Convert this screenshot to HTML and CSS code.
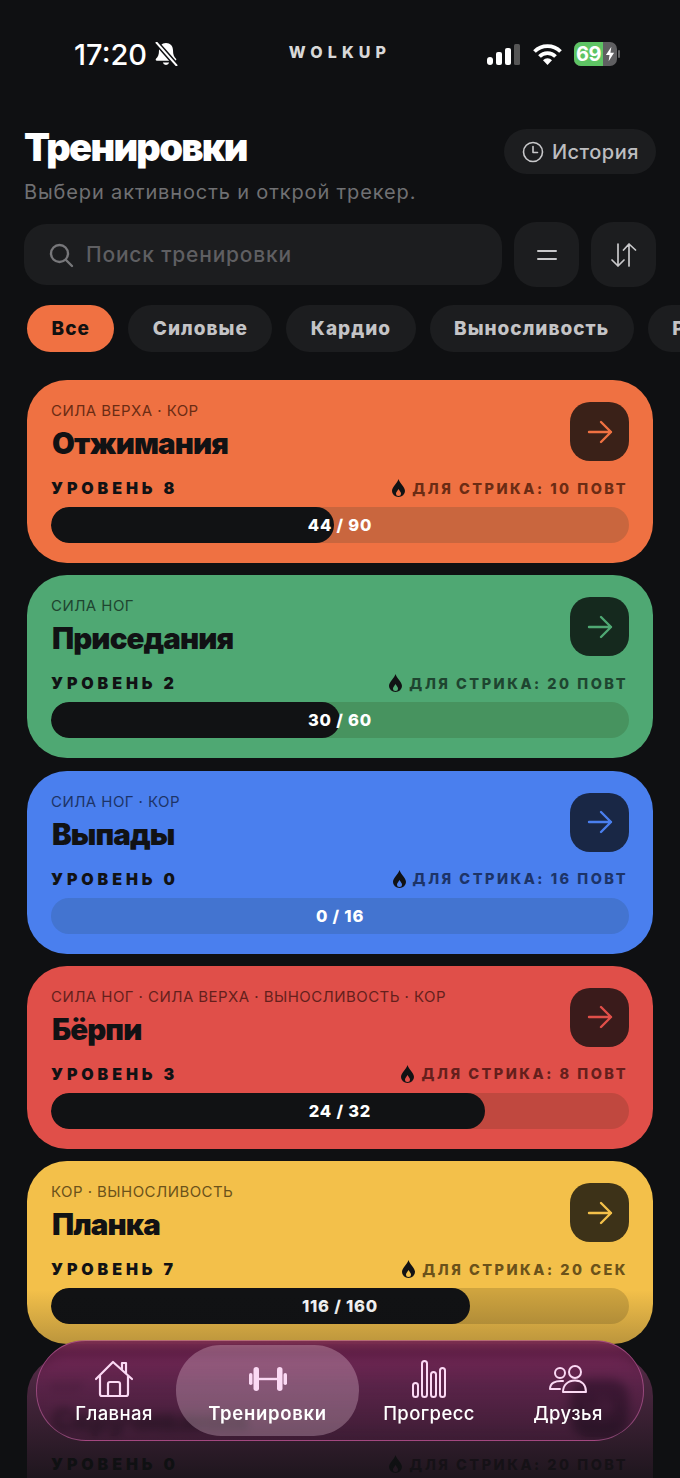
FILE: index.html
```html
<!DOCTYPE html>
<html lang="ru">
<head>
    <meta charset="UTF-8">
    <meta name="viewport" content="width=device-width, initial-scale=1.0">
    <title>Тренировки</title>
    <link rel="stylesheet" href="styles.css">
</head>
<body>
    <div class="screen">
        <div class="status">
            <div class="status-left">
                <span class="clock">17:20</span>
                <svg class="bell" width="24" height="24" viewBox="0 0 24 24">
                    <path d="M12 1c-4.200 0-7 3-7 7.300 0 4.500-1 6.500-3 8.500-.7.800-.3 2 .9 2h18.200c1.200 0 1.600-1.200.9-2C20 14.800 19 12.800 19 8.300 19 4 16.200 1 12 1zM8.800 20.500a3.300 3.300 0 0 0 6.400 0z" fill="#fff"/>
                    <path d="M2 0 L23 24" stroke="#0f1012" stroke-width="5"/>
                    <path d="M2 0 L23 24" stroke="#fff" stroke-width="2"/>
                </svg>
            </div>
            <div class="brand">WOLKUP</div>
            <div class="status-right">
                <svg width="33" height="21" viewBox="0 0 33 21">
                    <rect x="0" y="13" width="6" height="8" rx="3" fill="#fff"/>
                    <rect x="9" y="8" width="6" height="13" rx="2" fill="#fff"/>
                    <rect x="18" y="4" width="6" height="17" rx="2" fill="#fff"/>
                    <rect x="27" y="0" width="6" height="21" rx="1.500" fill="#555"/>
                </svg>
                <svg width="29" height="21" viewBox="0 0 29 21">
                    <path d="M1.500 7.500 A18.500 18.500 0 0 1 27.500 7.500" fill="none" stroke="#fff" stroke-width="3.800"/>
                    <path d="M6.500 12.500 A11.300 11.300 0 0 1 22.500 12.500" fill="none" stroke="#fff" stroke-width="3.800"/>
                    <path d="M14.500 21 L10 16.200 A6.400 6.400 0 0 1 19 16.200 Z" fill="#fff"/>
                </svg>
                <div class="battery">
                    <div class="battery-fill">69</div>
                    <svg class="bolt" width="10" height="16" viewBox="0 0 11 16"><path d="M7 0 L1 9 H5 L4 16 L10 6.500 H6 Z" fill="#fff"/></svg>
                </div>
            </div>
        </div>

        <div class="head">
            <div>
                <h1>Тренировки</h1>
                <p class="sub">Выбери активность и открой трекер.</p>
            </div>
            <div class="history">
                <svg width="22" height="22" viewBox="0 0 22 22" fill="none" stroke="#c8c8ca" stroke-width="1.600" stroke-linecap="round" stroke-linejoin="round">
                    <circle cx="11" cy="11" r="9.500"/><path d="M11 5.500 V11.500 H15.500"/>
                </svg>
                История
            </div>
        </div>

        <div class="search-row">
            <div class="search">
                <svg width="26" height="26" viewBox="0 0 26 26" fill="none" stroke="#77777a" stroke-width="2.400" stroke-linecap="round">
                    <circle cx="11.500" cy="11.500" r="8.500"/><path d="M18 18 L24 24"/>
                </svg>
                <span>Поиск тренировки</span>
            </div>
            <div class="square-btn">
                <svg width="22" height="14" viewBox="0 0 22 14"><path d="M2 3 H20 M2 11 H20" stroke="#c8c8ca" stroke-width="2" stroke-linecap="round"/></svg>
            </div>
            <div class="square-btn">
                <svg width="28" height="26" viewBox="0 0 28 26" fill="none" stroke="#c8c8ca" stroke-width="1.700" stroke-linecap="round" stroke-linejoin="round">
                    <path d="M8 2 V24 M2 18 L8 24 L14 18"/><path d="M19 24 V2 M13.500 8 L19 2 L25.500 8"/>
                </svg>
            </div>
        </div>

        <div class="chips">
            <div class="chip active">Все</div>
            <div class="chip">Силовые</div>
            <div class="chip">Кардио</div>
            <div class="chip">Выносливость</div>
            <div class="chip">Растяжка</div>
        </div>

        <div class="cards">
            <div class="card orange">
                <div class="card-top">
                    <div>
                        <div class="tags">СИЛА ВЕРХА · КОР</div>
                        <div class="name">Отжимания</div>
                    </div>
                    <div class="go"><svg width="26" height="26" viewBox="0 0 26 26"><path d="M2 13 H24 M14 3 L24 13 L14 23"/></svg></div>
                </div>
                <div class="meta">
                    <span class="level">УРОВЕНЬ 8</span>
                    <span class="streak"><svg width="13" height="18" viewBox="0 0 13 18"><path d="M6.500 0 C7.500 4 13 8 13 12 A6.500 6 0 0 1 0 12 C0 8 5.500 4 6.500 0 Z M6.500 10 C5.500 12 4 13 4 14.500 A2.500 2.500 0 0 0 9 14.500 C9 13 7.500 12 6.500 10 Z" fill="#111214" fill-rule="evenodd"/></svg>ДЛЯ СТРИКА: 10 ПОВТ</span>
                </div>
                <div class="bar">
                    <div class="bar-fill" style="width: 48.900%"></div>
                    <div class="bar-text">44 / 90</div>
                </div>
            </div>

            <div class="card green">
                <div class="card-top">
                    <div>
                        <div class="tags">СИЛА НОГ</div>
                        <div class="name">Приседания</div>
                    </div>
                    <div class="go"><svg width="26" height="26" viewBox="0 0 26 26"><path d="M2 13 H24 M14 3 L24 13 L14 23"/></svg></div>
                </div>
                <div class="meta">
                    <span class="level">УРОВЕНЬ 2</span>
                    <span class="streak"><svg width="13" height="18" viewBox="0 0 13 18"><path d="M6.500 0 C7.500 4 13 8 13 12 A6.500 6 0 0 1 0 12 C0 8 5.500 4 6.500 0 Z M6.500 10 C5.500 12 4 13 4 14.500 A2.500 2.500 0 0 0 9 14.500 C9 13 7.500 12 6.500 10 Z" fill="#111214" fill-rule="evenodd"/></svg>ДЛЯ СТРИКА: 20 ПОВТ</span>
                </div>
                <div class="bar">
                    <div class="bar-fill" style="width: 50%"></div>
                    <div class="bar-text">30 / 60</div>
                </div>
            </div>

            <div class="card blue">
                <div class="card-top">
                    <div>
                        <div class="tags">СИЛА НОГ · КОР</div>
                        <div class="name">Выпады</div>
                    </div>
                    <div class="go"><svg width="26" height="26" viewBox="0 0 26 26"><path d="M2 13 H24 M14 3 L24 13 L14 23"/></svg></div>
                </div>
                <div class="meta">
                    <span class="level">УРОВЕНЬ 0</span>
                    <span class="streak"><svg width="13" height="18" viewBox="0 0 13 18"><path d="M6.500 0 C7.500 4 13 8 13 12 A6.500 6 0 0 1 0 12 C0 8 5.500 4 6.500 0 Z M6.500 10 C5.500 12 4 13 4 14.500 A2.500 2.500 0 0 0 9 14.500 C9 13 7.500 12 6.500 10 Z" fill="#111214" fill-rule="evenodd"/></svg>ДЛЯ СТРИКА: 16 ПОВТ</span>
                </div>
                <div class="bar">
                    <div class="bar-text">0 / 16</div>
                </div>
            </div>

            <div class="card red">
                <div class="card-top">
                    <div>
                        <div class="tags">СИЛА НОГ · СИЛА ВЕРХА · ВЫНОСЛИВОСТЬ · КОР</div>
                        <div class="name">Бёрпи</div>
                    </div>
                    <div class="go"><svg width="26" height="26" viewBox="0 0 26 26"><path d="M2 13 H24 M14 3 L24 13 L14 23"/></svg></div>
                </div>
                <div class="meta">
                    <span class="level">УРОВЕНЬ 3</span>
                    <span class="streak"><svg width="13" height="18" viewBox="0 0 13 18"><path d="M6.500 0 C7.500 4 13 8 13 12 A6.500 6 0 0 1 0 12 C0 8 5.500 4 6.500 0 Z M6.500 10 C5.500 12 4 13 4 14.500 A2.500 2.500 0 0 0 9 14.500 C9 13 7.500 12 6.500 10 Z" fill="#111214" fill-rule="evenodd"/></svg>ДЛЯ СТРИКА: 8 ПОВТ</span>
                </div>
                <div class="bar">
                    <div class="bar-fill" style="width: 75%"></div>
                    <div class="bar-text">24 / 32</div>
                </div>
            </div>

            <div class="card yellow">
                <div class="card-top">
                    <div>
                        <div class="tags">КОР · ВЫНОСЛИВОСТЬ</div>
                        <div class="name">Планка</div>
                    </div>
                    <div class="go"><svg width="26" height="26" viewBox="0 0 26 26"><path d="M2 13 H24 M14 3 L24 13 L14 23"/></svg></div>
                </div>
                <div class="meta">
                    <span class="level">УРОВЕНЬ 7</span>
                    <span class="streak"><svg width="13" height="18" viewBox="0 0 13 18"><path d="M6.500 0 C7.500 4 13 8 13 12 A6.500 6 0 0 1 0 12 C0 8 5.500 4 6.500 0 Z M6.500 10 C5.500 12 4 13 4 14.500 A2.500 2.500 0 0 0 9 14.500 C9 13 7.500 12 6.500 10 Z" fill="#111214" fill-rule="evenodd"/></svg>ДЛЯ СТРИКА: 20 СЕК</span>
                </div>
                <div class="bar">
                    <div class="bar-fill" style="width: 72.500%"></div>
                    <div class="bar-text">116 / 160</div>
                </div>
            </div>

            <div class="card purple">
                <div class="card-top">
                    <div>
                        <div class="tags">КОР</div>
                        <div class="name">Скручивания</div>
                    </div>
                    <div class="go"><svg width="26" height="26" viewBox="0 0 26 26"><path d="M2 13 H24 M14 3 L24 13 L14 23"/></svg></div>
                </div>
                <div class="meta">
                    <span class="level">УРОВЕНЬ 0</span>
                    <span class="streak"><svg width="13" height="18" viewBox="0 0 13 18"><path d="M6.500 0 C7.500 4 13 8 13 12 A6.500 6 0 0 1 0 12 C0 8 5.500 4 6.500 0 Z M6.500 10 C5.500 12 4 13 4 14.500 A2.500 2.500 0 0 0 9 14.500 C9 13 7.500 12 6.500 10 Z" fill="#111214" fill-rule="evenodd"/></svg>ДЛЯ СТРИКА: 20 ПОВТ</span>
                </div>
            </div>
        </div>

        <div class="fade"></div>

        <div class="nav">
            <div class="nav-item first">
                <svg width="40" height="38" viewBox="0 0 40 38" fill="none" stroke="#fbd9f4" stroke-width="2.200" stroke-linecap="round" stroke-linejoin="round">
                    <path d="M2 19 L19 2 L38 19 M6 16 V34 a2 2 0 0 0 2 2 H32 a2 2 0 0 0 2 -2 V16"/>
                    <path d="M14 36 V24 a2 2 0 0 1 2 -2 H24 a2 2 0 0 1 2 2 V36"/>
                    <path d="M28 9 V3 H32 V13"/>
                </svg>
                <span>Главная</span>
            </div>
            <div class="nav-item current">
                <svg width="38" height="24" viewBox="0 0 38 24" fill="#fbd9f4">
                    <rect x="0" y="6" width="3.500" height="12" rx="1.750"/>
                    <rect x="4.500" y="0" width="5.500" height="24" rx="2.750"/>
                    <rect x="9" y="10.800" width="20" height="2.400"/>
                    <rect x="28" y="0" width="5.500" height="24" rx="2.750"/>
                    <rect x="34.500" y="6" width="3.500" height="12" rx="1.750"/>
                </svg>
                <span>Тренировки</span>
            </div>
            <div class="nav-item third">
                <svg width="34" height="38" viewBox="0 0 34 38" fill="none" stroke="#fbd9f4" stroke-width="2">
                    <rect x="1" y="23" width="5" height="14" rx="2.500"/>
                    <rect x="10" y="1" width="5" height="36" rx="2.500"/>
                    <rect x="19" y="12" width="5" height="25" rx="2.500"/>
                    <rect x="28" y="8" width="5" height="29" rx="2.500"/>
                </svg>
                <span>Прогресс</span>
            </div>
            <div class="nav-item fourth">
                <svg width="38" height="28" viewBox="0 0 38 28" fill="none" stroke="#fbd9f4" stroke-width="2" stroke-linecap="round" stroke-linejoin="round">
                    <circle cx="11" cy="8" r="5"/>
                    <circle cx="26" cy="7" r="6"/>
                    <path d="M14 16 C6 15.500 1 18 1 24 H11"/>
                    <path d="M14 27 C14 20 19 15.500 26 15.500 C33 15.500 37 20 37 27 Z"/>
                </svg>
                <span>Друзья</span>
            </div>
        </div>
    </div>
</body>
</html>
```

FILE: styles.css
```css
* { box-sizing: border-box; }
body {
    margin: 0;
    background: #0f1012;
    font-family: Inter, "Liberation Sans", sans-serif;
    color: #fff;
}
.screen {
    position: relative;
    width: 680px;
    height: 1478px;
    overflow: hidden;
    background: #0f1012;
}

/* status bar */
.status {
    display: flex;
    align-items: center;
    justify-content: space-between;
    height: 34px;
    margin-top: 37px;
    padding: 0 63px 0 74px;
    position: relative;
}
.status-left { display: flex; align-items: center; gap: 7px; }
.clock { font-size: 29px; font-weight: 500; }
.brand {
    position: absolute;
    left: 0;
    right: 0;
    top: 5px;
    text-align: center;
    font-size: 16px;
    font-weight: 800;
    letter-spacing: 5.100px;
    color: #d8d8d8;
}
.status-right { display: flex; align-items: center; gap: 12px; }
.status-right svg:first-child { margin-right: 1px; }
.battery {
    position: relative;
    display: flex;
    width: 43px;
    height: 24px;
    border-radius: 7px;
    background: #5f5f61;
}
.battery::after {
    content: "";
    position: absolute;
    right: -3px;
    top: 8px;
    width: 2px;
    height: 8px;
    border-radius: 1px;
    background: #5f5f61;
}
.battery-fill {
    width: 29px;
    border-radius: 7px 0 0 7px;
    background: #5ec464;
    font-size: 20px;
    font-weight: 700;
    line-height: 24px;
    text-align: center;
    letter-spacing: -0.5px;
    color: #fff;
}
.bolt { margin: 4px 0 0 2px; }

/* header */
.head {
    display: flex;
    justify-content: space-between;
    align-items: flex-start;
    margin-top: 55px;
    padding: 0 24px;
}
h1 {
    margin: -2px 0 0;
    font-size: 38px;
    line-height: 46px;
    font-weight: 900;
    letter-spacing: -1.7px;
}
.sub {
    margin: 9px 0 0;
    font-size: 20px;
    line-height: 26px;
    letter-spacing: 0.870px;
    color: #707073;
}
.history {
    display: flex;
    align-items: center;
    gap: 8px;
    height: 45px;
    padding: 0 17px 0 18px;
    margin-top: 3px;
    border-radius: 23px;
    background: #1c1d1f;
    color: #bdbdc0;
    font-size: 20px;
    font-weight: 500;
    letter-spacing: 0.5px;
}

/* search */
.search-row {
    display: flex;
    gap: 12px;
    margin-top: 19px;
    padding: 0 24px;
}
.search {
    display: flex;
    align-items: center;
    gap: 12px;
    flex: 1;
    height: 61px;
    padding: 0 24px;
    border-radius: 22px;
    background: #1c1d1f;
    color: #5f5f62;
    font-size: 21px;
    font-weight: 500;
    letter-spacing: 0.8px;
}
.square-btn {
    display: flex;
    align-items: center;
    justify-content: center;
    width: 65px;
    height: 65px;
    margin-top: -2px;
    border-radius: 22px;
    background: #1c1d1f;
}

/* filter chips */
.chips {
    display: flex;
    gap: 14px;
    margin-top: 18px;
    padding-left: 27px;
}
.chip {
    flex: none;
    height: 47px;
    padding: 0 24.500px;
    border-radius: 24px;
    background: #1c1d1f;
    color: #c4c4c6;
    font-size: 19px;
    font-weight: 800;
    line-height: 47px;
    letter-spacing: 1px;
}
.chip.active { background: #f07142; color: #111; }

/* workout cards */
.cards {
    display: flex;
    flex-direction: column;
    gap: 12.300px;
    margin-top: 28px;
    padding: 0 27px;
}
.card {
    flex: none;
    height: 183px;
    padding: 22px 24px 0;
    border-radius: 40px;
}
.orange { background: #ef7142; --arrow: #ef7142; --go: #3a2118; --track: #c9663e; --soft: #6b2c14; }
.green { background: #4fa873; --arrow: #4fa873; --go: #15291e; --track: #47935f; --soft: #1e4530; }
.blue { background: #4a7fee; --arrow: #4a7fee; --go: #192745; --track: #4374d0; --soft: #1d3468; }
.red { background: #e04f49; --arrow: #e04f49; --go: #3a1b1b; --track: #c0483f; --soft: #651f1c; }
.yellow { background: #f3c04a; --arrow: #f3c04a; --go: #3d3218; --track: #cfa43f; --soft: #6b521a; }
.purple { background: #74365f; --arrow: #74365f; --go: #1c1220; --track: #622f52; --soft: #2c1526; }

.card-top { display: flex; justify-content: space-between; height: 77px; }
.tags {
    font-size: 15px;
    line-height: 18px;
    font-weight: 400;
    letter-spacing: 0.450px;
    color: var(--soft);
}
.name {
    margin-top: 4px;
    padding-left: 1px;
    font-size: 29.500px;
    line-height: 38px;
    font-weight: 900;
    letter-spacing: -0.9px;
    color: #111214;
}
.go {
    display: flex;
    align-items: center;
    justify-content: center;
    width: 59px;
    height: 59px;
    border-radius: 20px;
    background: var(--go);
}
.go svg { fill: none; stroke: var(--arrow); stroke-width: 2.400; stroke-linecap: round; stroke-linejoin: round; }
.meta {
    display: flex;
    justify-content: space-between;
    align-items: center;
    height: 22px;
    margin-top: -2px;
    padding-right: 1px;
}
.level {
    font-size: 16px;
    font-weight: 900;
    letter-spacing: 3.900px;
    color: #111214;
}
.streak {
    display: flex;
    align-items: center;
    gap: 7px;
    font-size: 14.500px;
    font-weight: 800;
    letter-spacing: 2.5px;
    color: var(--soft);
}
.bar {
    position: relative;
    height: 36px;
    margin-top: 8px;
    border-radius: 18px;
    background: var(--track);
    overflow: hidden;
}
.bar-fill {
    height: 100%;
    border-radius: 18px;
    background: #111214;
}
.bar-text {
    position: absolute;
    left: 0;
    right: 0;
    top: 0;
    text-align: center;
    font-size: 16.500px;
    font-weight: 800;
    line-height: 36px;
    letter-spacing: 0.8px;
}

/* dark fade at the bottom of the screen */
.fade {
    position: absolute;
    left: 0;
    right: 0;
    bottom: 0;
    height: 188px;
    background: linear-gradient(to bottom, rgba(15, 16, 18, 0), rgba(15, 16, 18, 0.85));
}

/* tab bar */
.nav {
    position: absolute;
    left: 36px;
    top: 1340px;
    display: flex;
    align-items: center;
    width: 608px;
    height: 101px;
    padding-left: 15px;
    border-radius: 50px;
    border: 1px solid rgba(230, 120, 190, 0.45);
    background: linear-gradient(to bottom, rgba(120, 35, 85, 0.85), rgba(110, 32, 85, 0.45) 45%, rgba(100, 30, 80, 0.25));
    backdrop-filter: blur(5px);
}
.nav-item {
    display: flex;
    flex-direction: column;
    align-items: center;
    flex: none;
    height: 91px;
    font-size: 18.500px;
    line-height: 22px;
    font-weight: 500;
    letter-spacing: 0.4px;
}
.nav-item svg { height: 40px; margin-top: 14px; margin-bottom: 3px; }
.nav-item.first { width: 124px; }
.nav-item.third { width: 140px; }
.nav-item.fourth { width: 138px; }
.nav-item.current {
    width: 183px;
    border-radius: 45px;
    background: rgba(255, 225, 240, 0.27);
    font-weight: 600;
    letter-spacing: 0.7px;
}
```
